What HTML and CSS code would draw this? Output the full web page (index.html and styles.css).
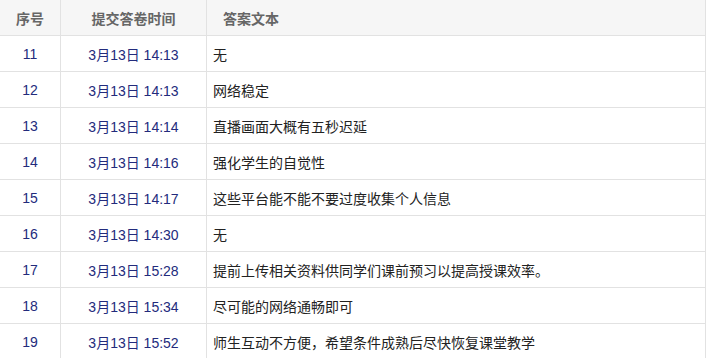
FILE: index.html
```html
<!DOCTYPE html>
<html lang="zh">
<head>
<meta charset="utf-8">
<link rel="stylesheet" href="styles.css">
</head>
<body>
<div class="table">
  <div class="row head">
    <div class="cell c1">序号</div>
    <div class="cell c2">提交答卷时间</div>
    <div class="cell c3">答案文本</div>
  </div>
  <div class="row"><div class="cell c1 num">11</div><div class="cell c2 num">3月13日 14:13</div><div class="cell c3">无</div></div>
  <div class="row"><div class="cell c1 num">12</div><div class="cell c2 num">3月13日 14:13</div><div class="cell c3">网络稳定</div></div>
  <div class="row"><div class="cell c1 num">13</div><div class="cell c2 num">3月13日 14:14</div><div class="cell c3">直播画面大概有五秒迟延</div></div>
  <div class="row"><div class="cell c1 num">14</div><div class="cell c2 num">3月13日 14:16</div><div class="cell c3">强化学生的自觉性</div></div>
  <div class="row"><div class="cell c1 num">15</div><div class="cell c2 num">3月13日 14:17</div><div class="cell c3">这些平台能不能不要过度收集个人信息</div></div>
  <div class="row"><div class="cell c1 num">16</div><div class="cell c2 num">3月13日 14:30</div><div class="cell c3">无</div></div>
  <div class="row"><div class="cell c1 num">17</div><div class="cell c2 num">3月13日 15:28</div><div class="cell c3">提前上传相关资料供同学们课前预习以提高授课效率。</div></div>
  <div class="row"><div class="cell c1 num">18</div><div class="cell c2 num">3月13日 15:34</div><div class="cell c3">尽可能的网络通畅即可</div></div>
  <div class="row"><div class="cell c1 num">19</div><div class="cell c2 num">3月13日 15:52</div><div class="cell c3">师生互动不方便，希望条件成熟后尽快恢复课堂教学</div></div>
</div>
</body>
</html>
```
FILE: styles.css
```css
html, body {
  margin: 0;
  padding: 0;
  background: #ffffff;
}
body {
  font-family: "Liberation Sans", "Noto Sans CJK SC", sans-serif;
  font-size: 14px;
  color: #222;
}
.table {
  width: 706px;
}
.row {
  display: grid;
  grid-template-columns: 61px 146px 499px;
  height: 36px;
  border-bottom: 1px solid #e2e2e2;
  box-sizing: border-box;
}
.cell {
  display: flex;
  align-items: center;
  border-right: 1px solid #e2e2e2;
  box-sizing: border-box;
}
.c1, .c2 {
  justify-content: center;
}
.c3 {
  padding-left: 6px;
}
.head {
  background: #f6f6f6;
  color: #666;
  font-weight: bold;
}
.head .c3 {
  padding-left: 16px;
}
.num {
  color: #232b7c;
}
```
